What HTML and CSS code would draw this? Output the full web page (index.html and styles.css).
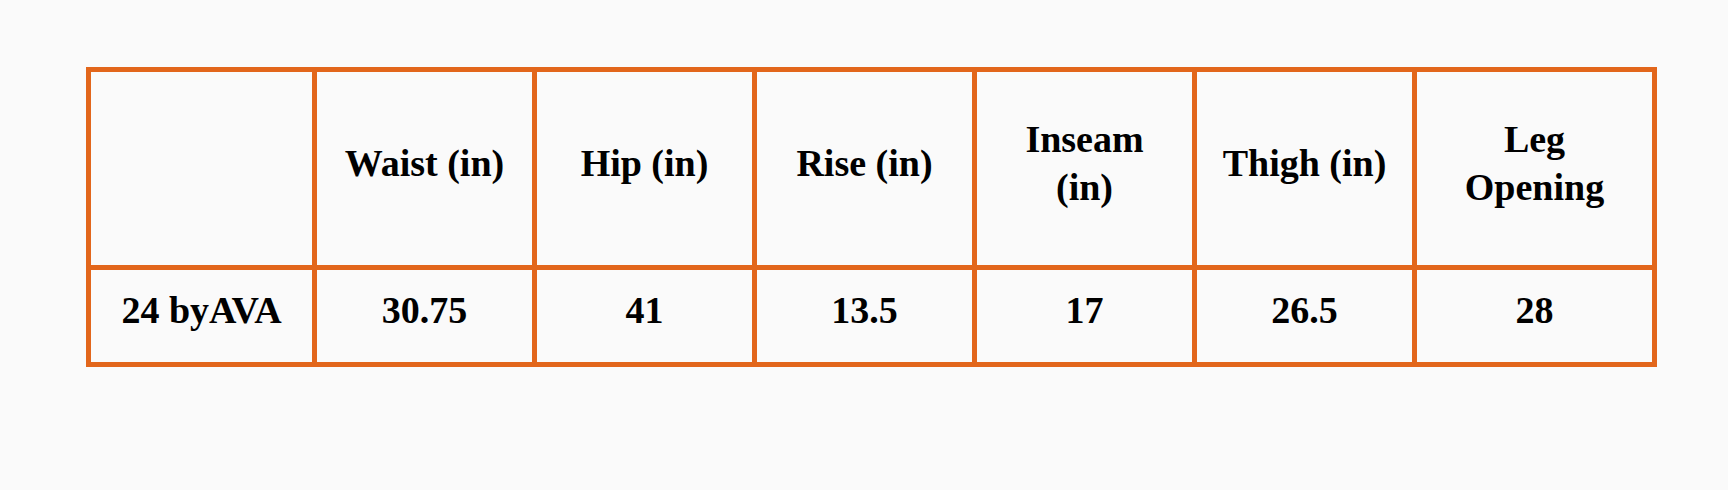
FILE: index.html
```html
<!DOCTYPE html>
<html lang="en">
<head>
<meta charset="utf-8">
<title>Size chart</title>
<link rel="stylesheet" href="styles.css">
</head>
<body>
<div class="page">
  <div class="chart" role="table">
    <div class="cell head" role="columnheader"></div>
    <div class="cell head" role="columnheader">Waist (in)</div>
    <div class="cell head" role="columnheader">Hip (in)</div>
    <div class="cell head" role="columnheader">Rise (in)</div>
    <div class="cell head" role="columnheader">Inseam<br>(in)</div>
    <div class="cell head" role="columnheader">Thigh (in)</div>
    <div class="cell head" role="columnheader">Leg<br>Opening</div>
    <div class="cell" role="cell">24 byAVA</div>
    <div class="cell" role="cell">30.75</div>
    <div class="cell" role="cell">41</div>
    <div class="cell" role="cell">13.5</div>
    <div class="cell" role="cell">17</div>
    <div class="cell" role="cell">26.5</div>
    <div class="cell" role="cell">28</div>
  </div>
</div>
</body>
</html>
```

FILE: styles.css
```css
html, body {
  margin: 0;
  padding: 0;
  background: #fafafa;
}

.page {
  padding: 67px 0 0 86px;
  height: 490px;
  box-sizing: border-box;
}

.chart {
  display: grid;
  grid-template-columns: 226px repeat(5, 220px) 240px;
  grid-template-rows: 198px 97px;
  width: max-content;
  border-top: 5px solid #e2661b;
  border-left: 5px solid #e2661b;
  font-family: "Liberation Serif", "Times New Roman", serif;
  font-weight: 700;
  font-size: 38px;
  line-height: 48px;
  color: #000;
}

.cell {
  box-sizing: border-box;
  border-right: 5px solid #e2661b;
  border-bottom: 5px solid #e2661b;
  display: flex;
  align-items: center;
  justify-content: center;
  text-align: center;
  padding: 0 12px 12px 12px;
}
```
